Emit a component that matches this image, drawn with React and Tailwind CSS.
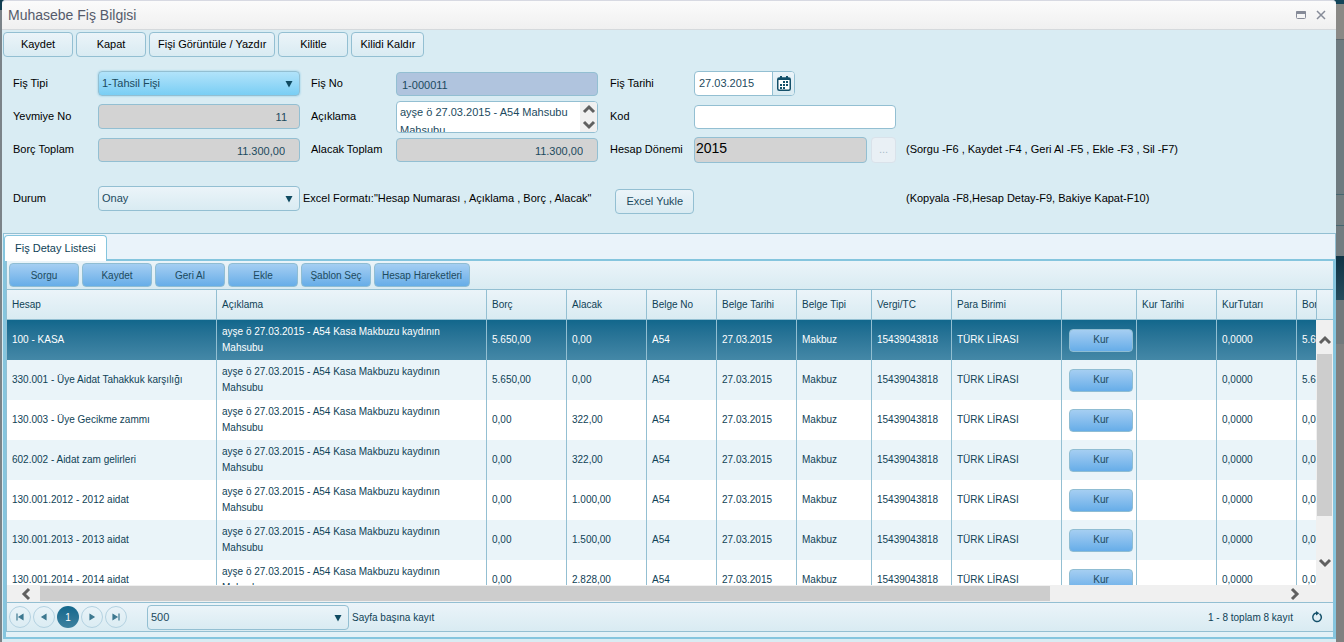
import React, { useState } from 'react';

const entries = [
  { account: '100 - KASA', debit: '5.650,00', credit: '0,00' },
  { account: '330.001 - Üye Aidat Tahakkuk karşılığı', debit: '5.650,00', credit: '0,00' },
  { account: '130.003 - Üye Gecikme zammı', debit: '0,00', credit: '322,00' },
  { account: '602.002 - Aidat zam gelirleri', debit: '0,00', credit: '322,00' },
  { account: '130.001.2012 - 2012 aidat', debit: '0,00', credit: '1.000,00' },
  { account: '130.001.2013 - 2013 aidat', debit: '0,00', credit: '1.500,00' },
  { account: '130.001.2014 - 2014 aidat', debit: '0,00', credit: '2.828,00' },
];

const columns = [
  { name: 'Hesap', width: 'w-[210px]' },
  { name: 'Açıklama', width: 'w-[270px]' },
  { name: 'Borç', width: 'w-[80px]' },
  { name: 'Alacak', width: 'w-[80px]' },
  { name: 'Belge No', width: 'w-[70px]' },
  { name: 'Belge Tarihi', width: 'w-[80px]' },
  { name: 'Belge Tipi', width: 'w-[75px]' },
  { name: 'Vergi/TC', width: 'w-[80px]' },
  { name: 'Para Birimi', width: 'w-[110px]' },
  { name: '', width: 'w-[75px]' },
  { name: 'Kur Tarihi', width: 'w-[80px]' },
  { name: 'KurTutarı', width: 'w-[80px]' },
  { name: 'Borç Döviz', width: 'w-[80px]' },
];

const box = 'rounded-[4px] border border-[#93bfd2] text-[11px] text-[#1c4a5e] outline-none';
const panelGradient = 'bg-linear-to-b from-[#ebf4f9] to-[#d9ebf2]';

const arrowPaths = {
  up: 'M2 9 L7 4 L12 9',
  down: 'M2 5 L7 10 L12 5',
  left: 'M9 2 L4 7 L9 12',
  right: 'M5 2 L10 7 L5 12',
};

const ScrollArrow = ({ dir }) => (
  <svg width="14" height="14" viewBox="0 0 14 14" className="shrink-0" aria-hidden="true">
    <path d={arrowPaths[dir]} fill="none" stroke="#606060" strokeWidth="3" />
  </svg>
);

const FormButton = ({ children, className = '' }) => (
  <button
    type="button"
    className={`h-[25px] min-w-[70px] rounded-[4px] border border-[#93bfd2] px-2 text-[11px] ${panelGradient} ${className}`}
  >
    {children}
  </button>
);

const BlueButton = ({ children, className = '' }) => (
  <button
    type="button"
    className={`rounded-[4px] border border-[#8fbdd3] bg-linear-to-b from-[#a5cef2] to-[#66ade8] text-[10px] text-[#1c4a5e] ${className}`}
  >
    {children}
  </button>
);

const Select = ({ id, options, className = '' }) => (
  <div className="relative w-[202px]">
    <select id={id} className={`${box} h-[25px] w-full appearance-none pr-6 pl-[3px] ${className || panelGradient}`}>
      {options.map((o) => (
        <option key={o}>{o}</option>
      ))}
    </select>
    <svg width="8" height="8" viewBox="0 0 8 8" className="pointer-events-none absolute top-[9px] right-[7px]" aria-hidden="true">
      <path d="M0.5 1 H7.5 L4 7.5 Z" fill="#0f4a61" />
    </svg>
  </div>
);

const pagerIcons = {
  first: 'M3 2.5 V9.5 M9 3.5 L5 6 L9 8.5 Z',
  prev: 'M8 3.5 L4 6 L8 8.5 Z',
  next: 'M4 3.5 L8 6 L4 8.5 Z',
  last: 'M9 2.5 V9.5 M3 3.5 L7 6 L3 8.5 Z',
};

const PagerButton = ({ icon, label }) => (
  <button
    type="button"
    aria-label={label}
    className="flex size-[22px] items-center justify-center rounded-full border border-[#b4d2e1]"
  >
    <svg width="12" height="12" viewBox="0 0 12 12">
      <path d={pagerIcons[icon]} fill="#3d7890" stroke="#3d7890" strokeWidth="1.2" />
    </svg>
  </button>
);

const TitleBar = () => (
  <header className="flex h-[30px] items-center justify-between rounded-t-[4px] border-t border-b border-t-[#d7d9e2] border-b-[#d5d9dc] bg-linear-to-b from-[#fbfbfb] to-[#f0f0f0] pr-2.5 pl-1.5">
    <h1 className="text-[14px] text-[#555b6b]">Muhasebe Fiş Bilgisi</h1>
    <div className="flex items-center gap-2.5">
      <button type="button" aria-label="Büyüt">
        <svg width="10" height="8" viewBox="0 0 10 8">
          <rect x="0.5" y="0.5" width="9" height="7" rx="1" fill="none" stroke="#868b98" />
          <rect x="0" y="0" width="10" height="3" rx="1" fill="#868b98" />
        </svg>
      </button>
      <button type="button" aria-label="Pencereyi kapat">
        <svg width="10" height="10" viewBox="0 0 10 10">
          <path d="M1 1 L9 9 M9 1 L1 9" fill="none" stroke="#868b98" strokeWidth="1.5" />
        </svg>
      </button>
    </div>
  </header>
);

const VoucherForm = () => (
  <form className="mt-2.5 ml-[11px] grid grid-cols-[85px_213px_85px_214px_84px_212px_auto] grid-rows-[33px_33px_33px_49px] items-center text-[11px]">
    <label htmlFor="type">Fiş Tipi</label>
    <Select
      id="type"
      options={['1-Tahsil Fişi']}
      className="bg-linear-to-b from-[#b1e3fa] to-[#79cef4] shadow-[0_0_2px_#7cc4e4]"
    />
    <label htmlFor="no">Fiş No</label>
    <input id="no" defaultValue="1-000011" className={`${box} h-6 w-[202px] bg-[#b0c4de] px-[5px] pt-0.5`} />
    <label htmlFor="date">Fiş Tarihi</label>
    <div className={`${box} flex h-[25px] w-[101px] overflow-hidden bg-white`}>
      <input id="date" defaultValue="27.03.2015" className="min-w-0 flex-1 px-1 outline-none" />
      <button
        type="button"
        aria-label="Takvim"
        className={`flex w-[22px] items-center justify-center border-l border-[#93bfd2] ${panelGradient}`}
      >
        <svg width="14" height="15" viewBox="0 0 14 15">
          <rect x="0.75" y="2" width="12.5" height="12.25" rx="1.5" fill="#fff" stroke="#14506a" strokeWidth="1.5" />
          <path d="M1 3 H13 M4 0 V3 M10 0 V3" stroke="#14506a" strokeWidth="2" />
          <path d="M6 6 h2 M9 6 h2 M3 9 h2 M6 9 h2 M9 9 h2 M3 12 h2 M6 12 h2" stroke="#14506a" strokeWidth="2" />
        </svg>
      </button>
    </div>
    <span />

    <label htmlFor="journal">Yevmiye No</label>
    <input id="journal" readOnly defaultValue="11" className={`${box} h-[25px] w-[202px] bg-[#d3d3d3] pr-3 text-right`} />
    <label htmlFor="description">Açıklama</label>
    <div className={`${box} flex h-8 w-[202px] overflow-hidden bg-white`}>
      <textarea
        id="description"
        defaultValue={'ayşe ö 27.03.2015 - A54 Mahsubu\nMahsubu'}
        className="min-w-0 flex-1 resize-none overflow-hidden px-[3px] pt-px leading-[18px] whitespace-pre outline-none"
      />
      <div className="flex w-[17px] flex-col items-center justify-center bg-[#f0f0f0]">
        <ScrollArrow dir="up" />
        <ScrollArrow dir="down" />
      </div>
    </div>
    <label htmlFor="code">Kod</label>
    <input id="code" className={`${box} h-6 w-[202px] bg-white px-1`} />
    <span />

    <label htmlFor="debit">Borç Toplam</label>
    <input id="debit" readOnly defaultValue="11.300,00" className={`${box} h-6 w-[202px] bg-[#d3d3d3] pt-0.5 pr-3.5 text-right`} />
    <label htmlFor="credit">Alacak Toplam</label>
    <input id="credit" readOnly defaultValue="11.300,00" className={`${box} h-6 w-[202px] bg-[#d3d3d3] pt-0.5 pr-3.5 text-right`} />
    <label htmlFor="period">Hesap Dönemi</label>
    <div className="flex items-center gap-1">
      <input
        id="period"
        readOnly
        defaultValue="2015"
        className="h-[26px] w-[173px] rounded-[4px] border border-[#93bfd2] bg-[#d3d3d3] px-px pb-1 text-[14px] text-black outline-none"
      />
      <button type="button" disabled className="h-[26px] w-[25px] rounded-[4px] border border-[#d9e2ea] bg-[#e9f0f5] text-[#a9bcc8]">
        ...
      </button>
    </div>
    <span>(Sorgu -F6 , Kaydet -F4 , Geri Al -F5 , Ekle -F3 , Sil -F7)</span>

    <label htmlFor="status" className="pt-4">Durum</label>
    <div className="pt-4">
      <Select id="status" options={['Onay']} />
    </div>
    <div className="col-span-3 -ml-2 flex items-center gap-6 pt-4">
      <span className="whitespace-nowrap">Excel Formatı:"Hesap Numarası , Açıklama , Borç , Alacak"</span>
      <FormButton className="mt-1.5 px-2.5 whitespace-nowrap text-[#1c4a5e]">Excel Yukle</FormButton>
    </div>
    <span />
    <span className="pt-4">(Kopyala -F8,Hesap Detay-F9, Bakiye Kapat-F10)</span>
  </form>
);

const DetailTable = ({ selected, onSelect }) => {
  const cell = 'h-10 overflow-hidden border-r border-[#93bfd2] px-[5px]';
  return (
    <div className="flex max-h-[295px] overflow-hidden">
      <div className="min-w-0 flex-1 overflow-hidden">
        <table className="w-[1370px] table-fixed border-separate border-spacing-0 text-left text-[10px] leading-4">
          <thead>
            <tr>
              {columns.map((c, i) => (
                <th
                  key={i}
                  className={`${c.width} h-[30px] border-r border-b border-[#93bfd2] px-[5px] font-normal whitespace-nowrap ${panelGradient}`}
                >
                  {c.name}
                </th>
              ))}
            </tr>
          </thead>
          <tbody>
            {entries.map((e, i) => {
              const tone =
                i === selected
                  ? 'bg-linear-to-b from-[#11678c] to-[#4488a7] text-white'
                  : i % 2
                    ? 'bg-[#eaf4f9]'
                    : 'bg-white';
              const cls = `${cell} ${tone}`;
              return (
                <tr key={e.account} onClick={() => onSelect(i)}>
                  <td className={cls}>{e.account}</td>
                  <td className={cls}>ayşe ö 27.03.2015 - A54 Kasa Makbuzu kaydının<br />Mahsubu</td>
                  <td className={cls}>{e.debit}</td>
                  <td className={cls}>{e.credit}</td>
                  <td className={cls}>A54</td>
                  <td className={cls}>27.03.2015</td>
                  <td className={cls}>Makbuz</td>
                  <td className={cls}>15439043818</td>
                  <td className={cls}>TÜRK LİRASI</td>
                  <td className={cls}>
                    <BlueButton className="ml-0.5 block h-[23px] w-16">Kur</BlueButton>
                  </td>
                  <td className={cls}></td>
                  <td className={cls}>0,0000</td>
                  <td className={cls}>{e.debit}</td>
                </tr>
              );
            })}
          </tbody>
        </table>
      </div>
      <div className="flex w-[17px] shrink-0 flex-col">
        <div className={`h-[30px] shrink-0 border-b border-l border-[#93bfd2] ${panelGradient}`} />
        <div className="flex flex-1 flex-col items-center bg-[#f0f0f0] pt-3.5 pb-4">
          <ScrollArrow dir="up" />
          <div className="mt-1.5 mb-auto h-[162px] w-[15px] bg-[#cdcdcd]" />
          <ScrollArrow dir="down" />
        </div>
      </div>
    </div>
  );
};

const Pager = () => (
  <footer className={`flex h-[30px] items-center border-t border-b border-[#93bfd2] pr-2.5 pl-0.5 text-[10px] ${panelGradient}`}>
    <nav className="flex items-center gap-0.5">
      <PagerButton icon="first" label="İlk sayfa" />
      <PagerButton icon="prev" label="Önceki sayfa" />
      <button
        type="button"
        className="size-[22px] rounded-full bg-linear-to-b from-[#11678c] to-[#3d819f] text-white"
      >
        1
      </button>
      <PagerButton icon="next" label="Sonraki sayfa" />
      <PagerButton icon="last" label="Son sayfa" />
    </nav>
    <div className="ml-5 flex items-center gap-[3px]">
      <Select id="size" options={['500']} />
      <label htmlFor="size">Sayfa başına kayıt</label>
    </div>
    <span className="ml-auto">1 - 8 toplam 8 kayıt</span>
    <button type="button" aria-label="Yenile" className="ml-[18px]">
      <svg width="12" height="12" viewBox="0 0 12 12">
        <path d="M8.6 2.8 A4.3 4.3 0 1 1 5 2.1" fill="none" stroke="#14506a" strokeWidth="1.5" />
        <path d="M5 0 L8.4 2.2 L5 4.6 Z" fill="#14506a" />
      </svg>
    </button>
  </footer>
);

export default function App() {
  const [selected, setSelected] = useState(0);

  return (
    <div className="flex min-h-screen font-['Liberation_Sans',Arial,sans-serif]">
      {/* dimmed page behind the dialog */}
      <div className="w-0.5 shrink-0 bg-linear-to-b from-[#123f52] from-[10px] to-[#7b8388] to-[10px]" />
      <main className="min-w-0 flex-1 bg-[#174353]">
        <div className="min-h-screen rounded-t-[4px] bg-[#d9ecf3] text-black">
          <TitleBar />
          <div className="flex gap-[3px] pt-0.5 pl-px">
            <FormButton>Kaydet</FormButton>
            <FormButton>Kapat</FormButton>
            <FormButton>Fişi Görüntüle / Yazdır</FormButton>
            <FormButton>Kilitle</FormButton>
            <FormButton>Kilidi Kaldır</FormButton>
          </div>
          <VoucherForm />

          <section className="mt-[18px] ml-px border-t border-[#93bfd2] text-[#0f4256]">
            <div className="flex h-[27px] items-end border-r border-l border-b-2 border-[#85c5de] border-r-[#93bfd2] bg-[#eaf3fa]">
              <button
                type="button"
                role="tab"
                aria-selected="true"
                className="-mb-0.5 h-[26px] rounded-t-[4px] border border-b-0 border-[#85c5de] bg-white px-2.5 text-[11px]"
              >
                Fiş Detay Listesi
              </button>
            </div>
            <div className="border-x-3 border-b-2 border-[#85c5de] bg-[#e3f1f7] pb-[5px]">
              <div className="border-l border-[#93bfd2]">
                <div className={`flex h-[29px] items-center gap-[3px] border-b border-[#93bfd2] pl-0.5 ${panelGradient}`}>
                  <BlueButton className="h-6 min-w-[70px]">Sorgu</BlueButton>
                  <BlueButton className="h-6 min-w-[70px]">Kaydet</BlueButton>
                  <BlueButton className="h-6 min-w-[70px]">Geri Al</BlueButton>
                  <BlueButton className="h-6 min-w-[70px]">Ekle</BlueButton>
                  <BlueButton className="h-6 min-w-[70px]">Şablon Seç</BlueButton>
                  <BlueButton className="h-6 px-[7px]">Hesap Hareketleri</BlueButton>
                </div>
                <DetailTable selected={selected} onSelect={setSelected} />
                <div className="flex h-[17px] items-center bg-[#f0f0f0] pr-8 pl-[13px]">
                  <ScrollArrow dir="left" />
                  <div className="ml-1.5 flex flex-1">
                    <div className="h-[15px] w-[81%] bg-[#cdcdcd]" />
                  </div>
                  <ScrollArrow dir="right" />
                </div>
                <Pager />
              </div>
            </div>
          </section>
        </div>
      </main>
      <div className="flex w-2 shrink-0 flex-col bg-[#808080]">
        <div className="h-1 bg-[#124459]" />
        <div className="h-9 border-b border-[#5b676c] bg-[#8a8986]" />
        <div className="h-[155px] border-b border-[#46666f] bg-[#6e7a7f]" />
        <div className="h-[31px] border-b border-[#46666f] bg-[#737d80]" />
        <div className="h-[30px] bg-[#727c80]" />
        <div className="h-11 bg-linear-to-b from-[#0f3345] to-[#264c5d]" />
        <div className="h-11 bg-[#72797c]" />
      </div>
    </div>
  );
}
